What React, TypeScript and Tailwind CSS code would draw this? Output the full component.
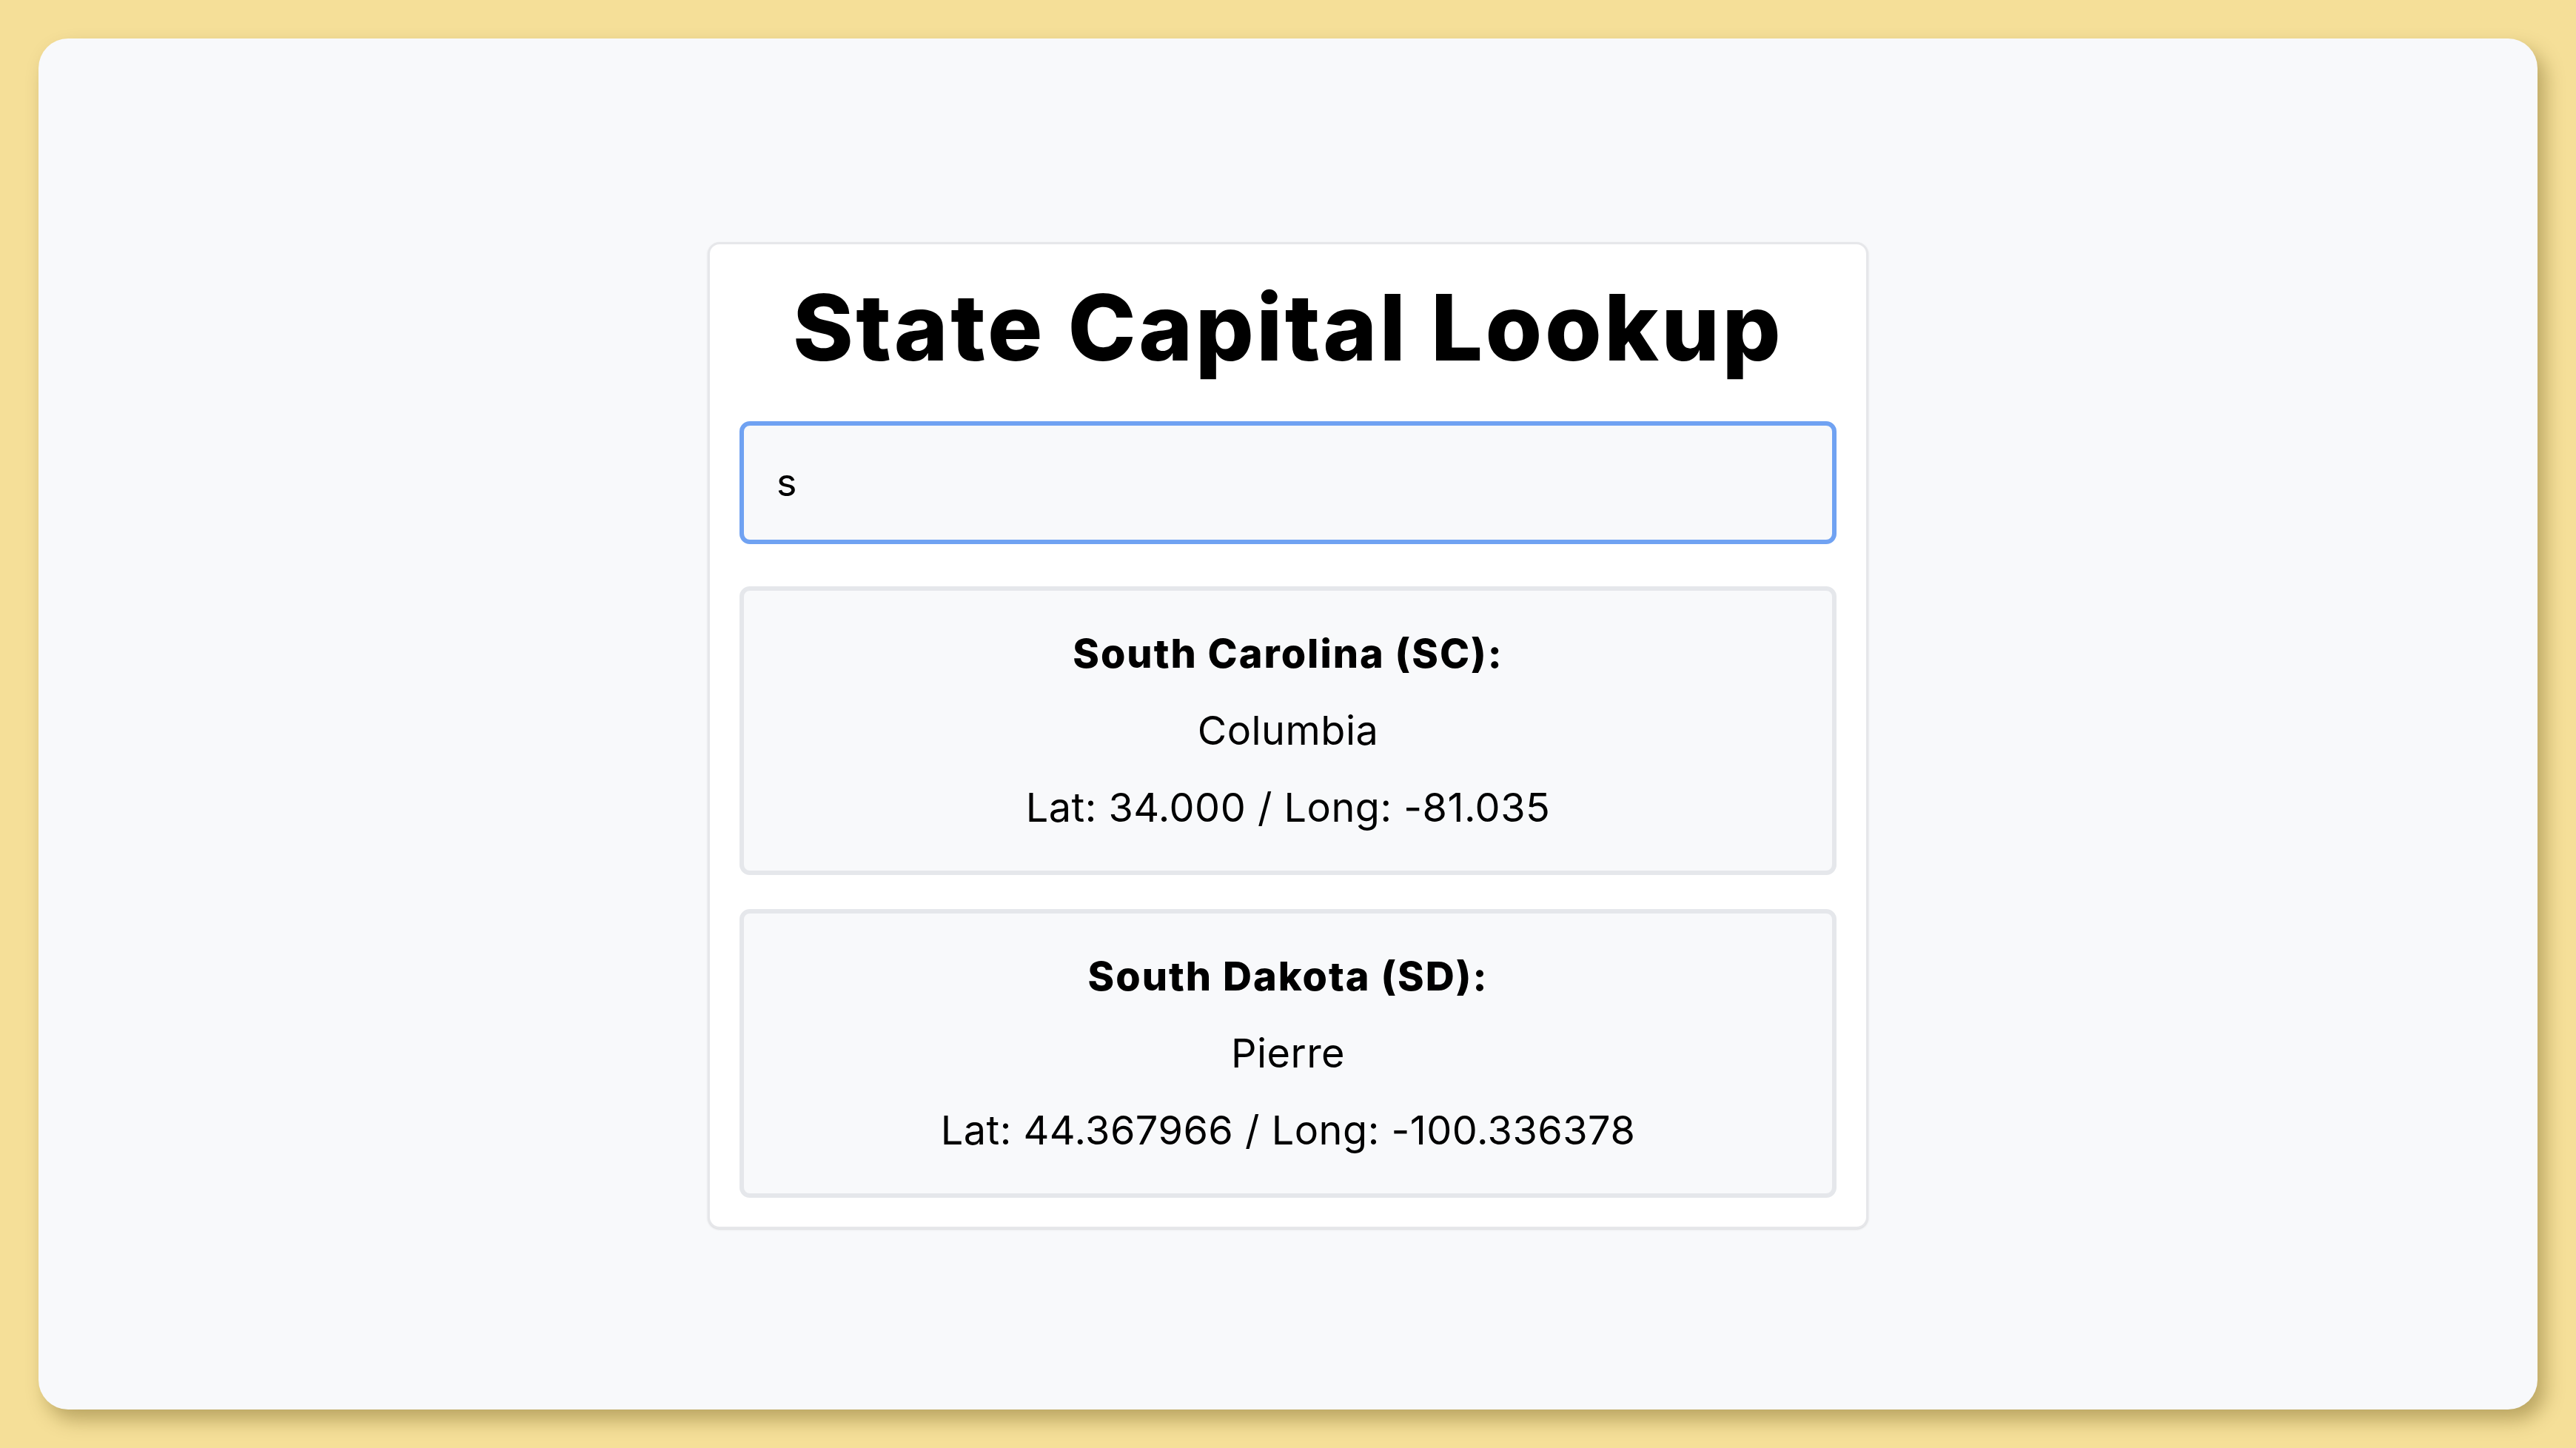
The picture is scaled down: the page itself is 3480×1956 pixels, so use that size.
const states = [
  {
    name: "South Carolina",
    abbr: "SC",
    capital: "Columbia",
    lat: "34.000",
    long: "-81.035",
  },
  {
    name: "South Dakota",
    abbr: "SD",
    capital: "Pierre",
    lat: "44.367966",
    long: "-100.336378",
  },
];

export default function App() {
  return (
    <div className="h-screen w-full bg-[#f5df98] p-[52px] flex font-['Inter','Liberation_Sans',sans-serif] text-black">
      <div className="flex-1 rounded-[40px] bg-[#f8f9fb] shadow-[10px_14px_26px_rgba(90,70,10,0.38)] flex justify-center items-center pt-[30px]">
        {/* ===== CARD ===== */}
        <div className="w-[1568px] bg-white border-[3px] border-[#e6e7ea] rounded-[16px] shadow-sm px-[40px] pt-[50px] pb-[39px]">
          <h1 className="text-[124px] leading-none font-extrabold text-center tracking-[3.5px] mb-[65px]">
            State Capital Lookup
          </h1>

          <input
            value="s"
            readOnly
            className="w-full h-[166px] bg-[#f8f9fb] border-[6px] border-[#70a2f2] rounded-[14px] pl-[44px] text-[52px] outline-none font-['Inter','Liberation_Sans',sans-serif] text-black"
          />

          {/* ===== RESULTS ===== */}
          <div className="mt-[57px] flex flex-col gap-[46px]">
            {states.map((s) => (
              <div
                key={s.abbr}
                className="bg-[#f8f9fb] border-[6px] border-[#e5e7eb] rounded-[14px] pt-[33px] pb-[33px] text-center text-[54px] leading-[104px] tracking-[0.5px]"
              >
                <div className="font-extrabold tracking-[2px]">
                  {s.name} ({s.abbr}):
                </div>
                <div>{s.capital}</div>
                <div>
                  Lat: {s.lat} / Long: {s.long}
                </div>
              </div>
            ))}
          </div>
        </div>
      </div>
    </div>
  );
}
